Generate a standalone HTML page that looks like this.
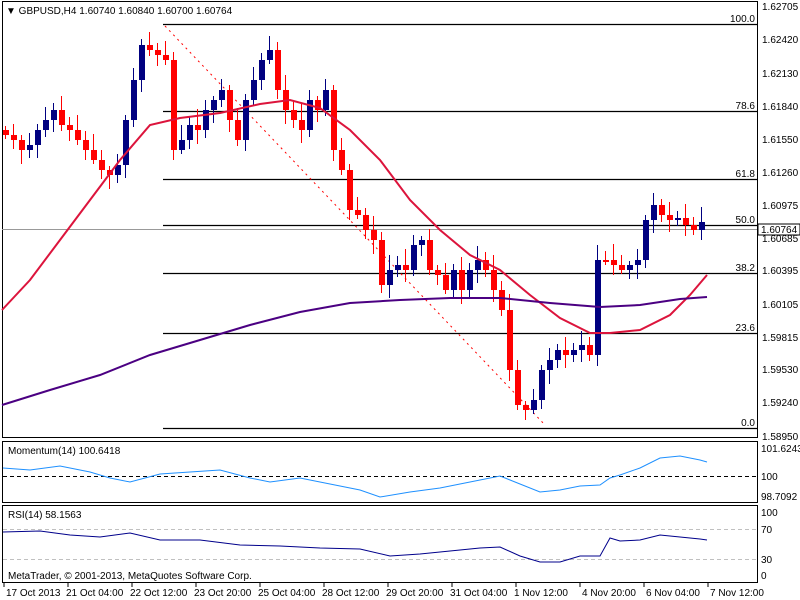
<!DOCTYPE html>
<html><head><meta charset="utf-8"><style>
html,body{margin:0;padding:0;background:#fff;}
svg{display:block;font-family:"Liberation Sans",sans-serif;}
</style></head><body>
<svg id="s" width="800" height="600" xmlns="http://www.w3.org/2000/svg">
<rect width="800" height="600" fill="#fff"/>
<g fill="none" stroke="#000" stroke-width="1">
<rect x="2.5" y="1.5" width="755" height="436"/>
<rect x="2.5" y="441.5" width="755" height="61"/>
<rect x="2.5" y="505.5" width="755" height="77"/>
</g>
<g stroke="#000" stroke-width="1.3">
<line x1="163" y1="24.5" x2="757" y2="24.5"/>
<line x1="163" y1="111.5" x2="757" y2="111.5"/>
<line x1="163" y1="179.5" x2="757" y2="179.5"/>
<line x1="163" y1="225.5" x2="757" y2="225.5"/>
<line x1="163" y1="273.5" x2="757" y2="273.5"/>
<line x1="163" y1="333.5" x2="757" y2="333.5"/>
<line x1="163" y1="428.5" x2="757" y2="428.5"/>
</g>
<line x1="2" y1="229.5" x2="757" y2="229.5" stroke="#999"/>
<line x1="165" y1="26" x2="545" y2="425" stroke="#f00" stroke-dasharray="2,4"/>
<g font-size="10" text-anchor="end" fill="#000">
<text x="755" y="22">100.0</text><text x="755" y="109">78.6</text><text x="755" y="177">61.8</text>
<text x="755" y="223">50.0</text><text x="755" y="271">38.2</text><text x="755" y="331">23.6</text><text x="755" y="426">0.0</text>
</g>
<g id="candles"></g>
<polyline fill="none" stroke="#dc143c" stroke-width="2" points="2,310 30,280 60,240 90,200 120,160 150,125 180,118 220,113 260,104 290,100 320,108 350,130 380,160 410,200 440,230 470,255 500,270 530,295 560,318 590,333 610,333 640,330 670,315 690,295 707,275"/>
<polyline fill="none" stroke="#4b0082" stroke-width="2" points="2,405 50,390 100,375 150,355 200,340 250,325 300,312 350,303 400,300 450,298 500,298 550,303 600,307 640,305 680,299 707,297"/>
<text x="6" y="14" font-size="10">▼ GBPUSD,H4  1.60740 1.60840 1.60700 1.60764</text>
<g font-size="10" fill="#000">
<text x="762" y="10">1.62705</text><text x="762" y="43">1.62420</text><text x="762" y="77">1.62130</text>
<text x="762" y="110">1.61840</text><text x="762" y="143">1.61550</text><text x="762" y="176">1.61260</text>
<text x="762" y="209">1.60975</text><text x="762" y="242">1.60685</text><text x="762" y="274">1.60395</text>
<text x="762" y="308">1.60105</text><text x="762" y="341">1.59815</text><text x="762" y="373">1.59530</text>
<text x="762" y="406">1.59240</text><text x="762" y="440">1.58950</text>
</g>
<rect x="758" y="224" width="42" height="11" fill="#fff" stroke="#000"/>
<text x="761" y="233" font-size="10">1.60764</text>
<line x1="3" y1="476.5" x2="757" y2="476.5" stroke="#000" stroke-dasharray="4,3"/>
<polyline fill="none" stroke="#1e90ff" points="3,468 30,470 60,466 90,472 110,478 130,482 160,474 190,472 220,470 250,478 270,482 300,478 330,484 360,490 380,497 410,492 440,488 470,482 500,476 520,484 540,492 560,490 580,486 600,485 610,478 620,475 640,468 660,458 680,456 700,460 707,462"/>
<text x="8" y="454" font-size="10">Momentum(14) 100.6418</text>
<g font-size="10"><text x="761" y="452">101.6243</text><text x="761" y="480">100</text><text x="761" y="500">98.7092</text></g>
<line x1="3" y1="529.5" x2="757" y2="529.5" stroke="#c0c0c0" stroke-dasharray="4,3"/>
<line x1="3" y1="559.5" x2="757" y2="559.5" stroke="#c0c0c0" stroke-dasharray="4,3"/>
<polyline fill="none" stroke="#00008b" points="3,532 40,531 70,535 100,537 130,533 160,540 200,540 240,545 280,546 320,548 360,549 390,556 420,554 450,551 480,548 500,547 520,556 540,562 560,562 580,556 600,556 610,538 620,541 640,540 660,535 680,537 700,539 707,540"/>
<text x="8" y="518" font-size="10">RSI(14) 58.1563</text>
<g font-size="10"><text x="761" y="516">100</text><text x="761" y="533">70</text><text x="761" y="563">30</text><text x="761" y="579">0</text></g>
<text x="8" y="579" font-size="10">MetaTrader, © 2001-2013, MetaQuotes Software Corp.</text>
<g stroke="#000"><line x1="4" y1="583" x2="4" y2="587"/><line x1="68" y1="583" x2="68" y2="587"/><line x1="132" y1="583" x2="132" y2="587"/><line x1="196" y1="583" x2="196" y2="587"/><line x1="260" y1="583" x2="260" y2="587"/><line x1="324" y1="583" x2="324" y2="587"/><line x1="388" y1="583" x2="388" y2="587"/><line x1="452" y1="583" x2="452" y2="587"/><line x1="516" y1="583" x2="516" y2="587"/><line x1="580" y1="583" x2="580" y2="587"/><line x1="644" y1="583" x2="644" y2="587"/><line x1="708" y1="583" x2="708" y2="587"/></g>
<g font-size="10">
<text x="6" y="596">17 Oct 2013</text><text x="66" y="596">21 Oct 04:00</text><text x="130" y="596">22 Oct 12:00</text>
<text x="194" y="596">23 Oct 20:00</text><text x="258" y="596">25 Oct 04:00</text><text x="322" y="596">28 Oct 12:00</text>
<text x="386" y="596">29 Oct 20:00</text><text x="450" y="596">31 Oct 04:00</text><text x="514" y="596">1 Nov 12:00</text>
<text x="582" y="596">4 Nov 20:00</text><text x="646" y="596">6 Nov 04:00</text><text x="710" y="596">7 Nov 12:00</text>
</g>
</svg>
<script>
var c=[135,140,150,145,130,120,110,125,130,140,150,160,170,175,165,120,80,45,50,55,60,150,140,125,130,110,100,90,120,140,100,80,60,50,90,110,120,130,100,110,90,150,170,210,215,230,240,285,270,265,270,245,240,270,275,290,270,290,270,260,270,290,310,370,405,410,400,370,360,350,355,350,345,355,260,260,265,270,265,260,220,205,215,220,218,225,230,222,228];
var g=document.getElementById('candles'),h='',prev=130;
for(var i=0;i<c.length;i++){var x=5+i*8;if(x>708)break;var o=prev,cl=c[i];
var hi=Math.min(o,cl)-(4+(i*7)%13),lo=Math.max(o,cl)+(4+(i*5)%11);
var col=cl<o?'#000080':'#ff0000';var t=Math.min(o,cl),b=Math.max(o,cl);if(b-t<2)b=t+2;
h+='<line x1="'+(x+0.5)+'" y1="'+hi+'" x2="'+(x+0.5)+'" y2="'+lo+'" stroke="'+col+'"/>';
h+='<rect x="'+(x-2)+'" y="'+t+'" width="6" height="'+(b-t)+'" fill="'+col+'"/>';prev=cl;}
g.innerHTML=h;
</script>
</body></html>
